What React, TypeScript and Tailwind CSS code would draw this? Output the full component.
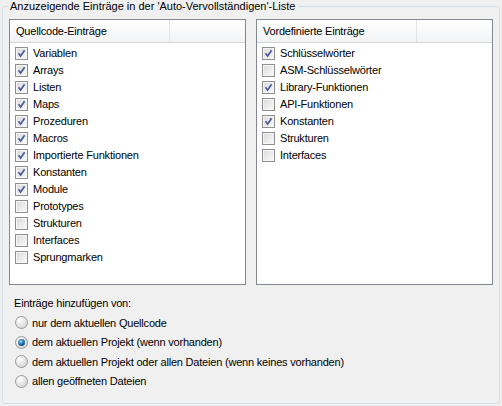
import React from "react";

const quellcode: [string, boolean][] = [
  ["Variablen", true],
  ["Arrays", true],
  ["Listen", true],
  ["Maps", true],
  ["Prozeduren", true],
  ["Macros", true],
  ["Importierte Funktionen", true],
  ["Konstanten", true],
  ["Module", true],
  ["Prototypes", false],
  ["Strukturen", false],
  ["Interfaces", false],
  ["Sprungmarken", false],
];

const vordefiniert: [string, boolean][] = [
  ["Schlüsselwörter", true],
  ["ASM-Schlüsselwörter", false],
  ["Library-Funktionen", true],
  ["API-Funktionen", false],
  ["Konstanten", true],
  ["Strukturen", false],
  ["Interfaces", false],
];

const options = [
  ["nur dem aktuellen Quellcode", false],
  ["dem aktuellen Projekt (wenn vorhanden)", true],
  ["dem aktuellen Projekt oder allen Dateien (wenn keines vorhanden)", false],
  ["allen geöffneten Dateien", false],
] as const;

function CheckBox({ checked }: { checked: boolean }) {
  return (
    <div className="w-[13px] h-[13px] border border-[#8f8f8f] bg-[#f6f6f6] p-[1px] shrink-0">
      <div className="w-full h-full bg-gradient-to-br from-[#dcdcdc] to-[#f8f8f8] flex items-center justify-center">
        {checked && (
          <svg width="9" height="9" viewBox="0 0 9 9">
            <path d="M1.5 4.3 L3.6 7 L7.6 1.2" fill="none" stroke="#4a5c9c" strokeWidth="1.7" />
          </svg>
        )}
      </div>
    </div>
  );
}

function Radio({ checked }: { checked: boolean }) {
  return (
    <svg width="13" height="13" viewBox="0 0 13 13" className="shrink-0">
      <defs>
        <radialGradient id="rg" cx="0.35" cy="0.3" r="0.8">
          <stop offset="0" stopColor="#ffffff" />
          <stop offset="1" stopColor="#d0d0d0" />
        </radialGradient>
        <radialGradient id="dot" cx="0.4" cy="0.35" r="0.7">
          <stop offset="0" stopColor="#9adaf7" />
          <stop offset="0.5" stopColor="#2a7fc0" />
          <stop offset="1" stopColor="#0d3f6e" />
        </radialGradient>
      </defs>
      <circle cx="6.5" cy="6.5" r="6" fill="url(#rg)" stroke="#9a9a9a" strokeWidth="1" />
      {checked && <circle cx="6.5" cy="6.5" r="3.4" fill="url(#dot)" />}
    </svg>
  );
}

function ListBox({ title, items }: { title: string; items: [string, boolean][] }) {
  return (
    <div className="w-[237px] h-[266px] border border-[#828790] bg-white flex flex-col">
      <div className="h-[23px] flex border-b border-[#d5d5d5] bg-gradient-to-b from-white to-[#f2f3f5]">
        <div className="w-[160px] pl-[6px] flex items-center border-r border-[#e3e5e7]">{title}</div>
        <div className="flex-1" />
      </div>
      <div className="pt-[2px] pl-[5px]">
        {items.map(([label, checked], i) => (
          <div key={i} className="h-[17px] flex items-center gap-[5px]">
            <CheckBox checked={checked} />
            <span>{label}</span>
          </div>
        ))}
      </div>
    </div>
  );
}

export default function App() {
  return (
    <div
      className="w-[502px] h-[406px] bg-[#f0f0f0] pt-[6px] px-[2px] text-[11px] text-black tracking-[-0.2px]"
      style={{ fontFamily: '"Liberation Sans", Arial, sans-serif' }}
    >
      <div className="relative h-[398px] border border-[#d5dfe5] rounded-[3px] pt-[12px] pl-[6px]">
        <span className="absolute -top-[8px] left-[5px] px-[2px] bg-[#f0f0f0] leading-[14px] tracking-normal">
          Anzuzeigende Einträge in der 'Auto-Vervollständigen'-Liste
        </span>
        <div className="flex gap-[10px]">
          <ListBox title="Quellcode-Einträge" items={quellcode} />
          <ListBox title="Vordefinierte Einträge" items={vordefiniert} />
        </div>
        <div className="pl-[5px] pt-[9px]">
          <div className="h-[19px] flex items-center">Einträge hinzufügen von:</div>
          <div className="pl-[1px]">
            {options.map(([label, checked], i) => (
              <div key={i} className="h-[19.6px] flex items-center gap-[4px]">
                <Radio checked={checked} />
                <span>{label}</span>
              </div>
            ))}
          </div>
        </div>
      </div>
    </div>
  );
}
